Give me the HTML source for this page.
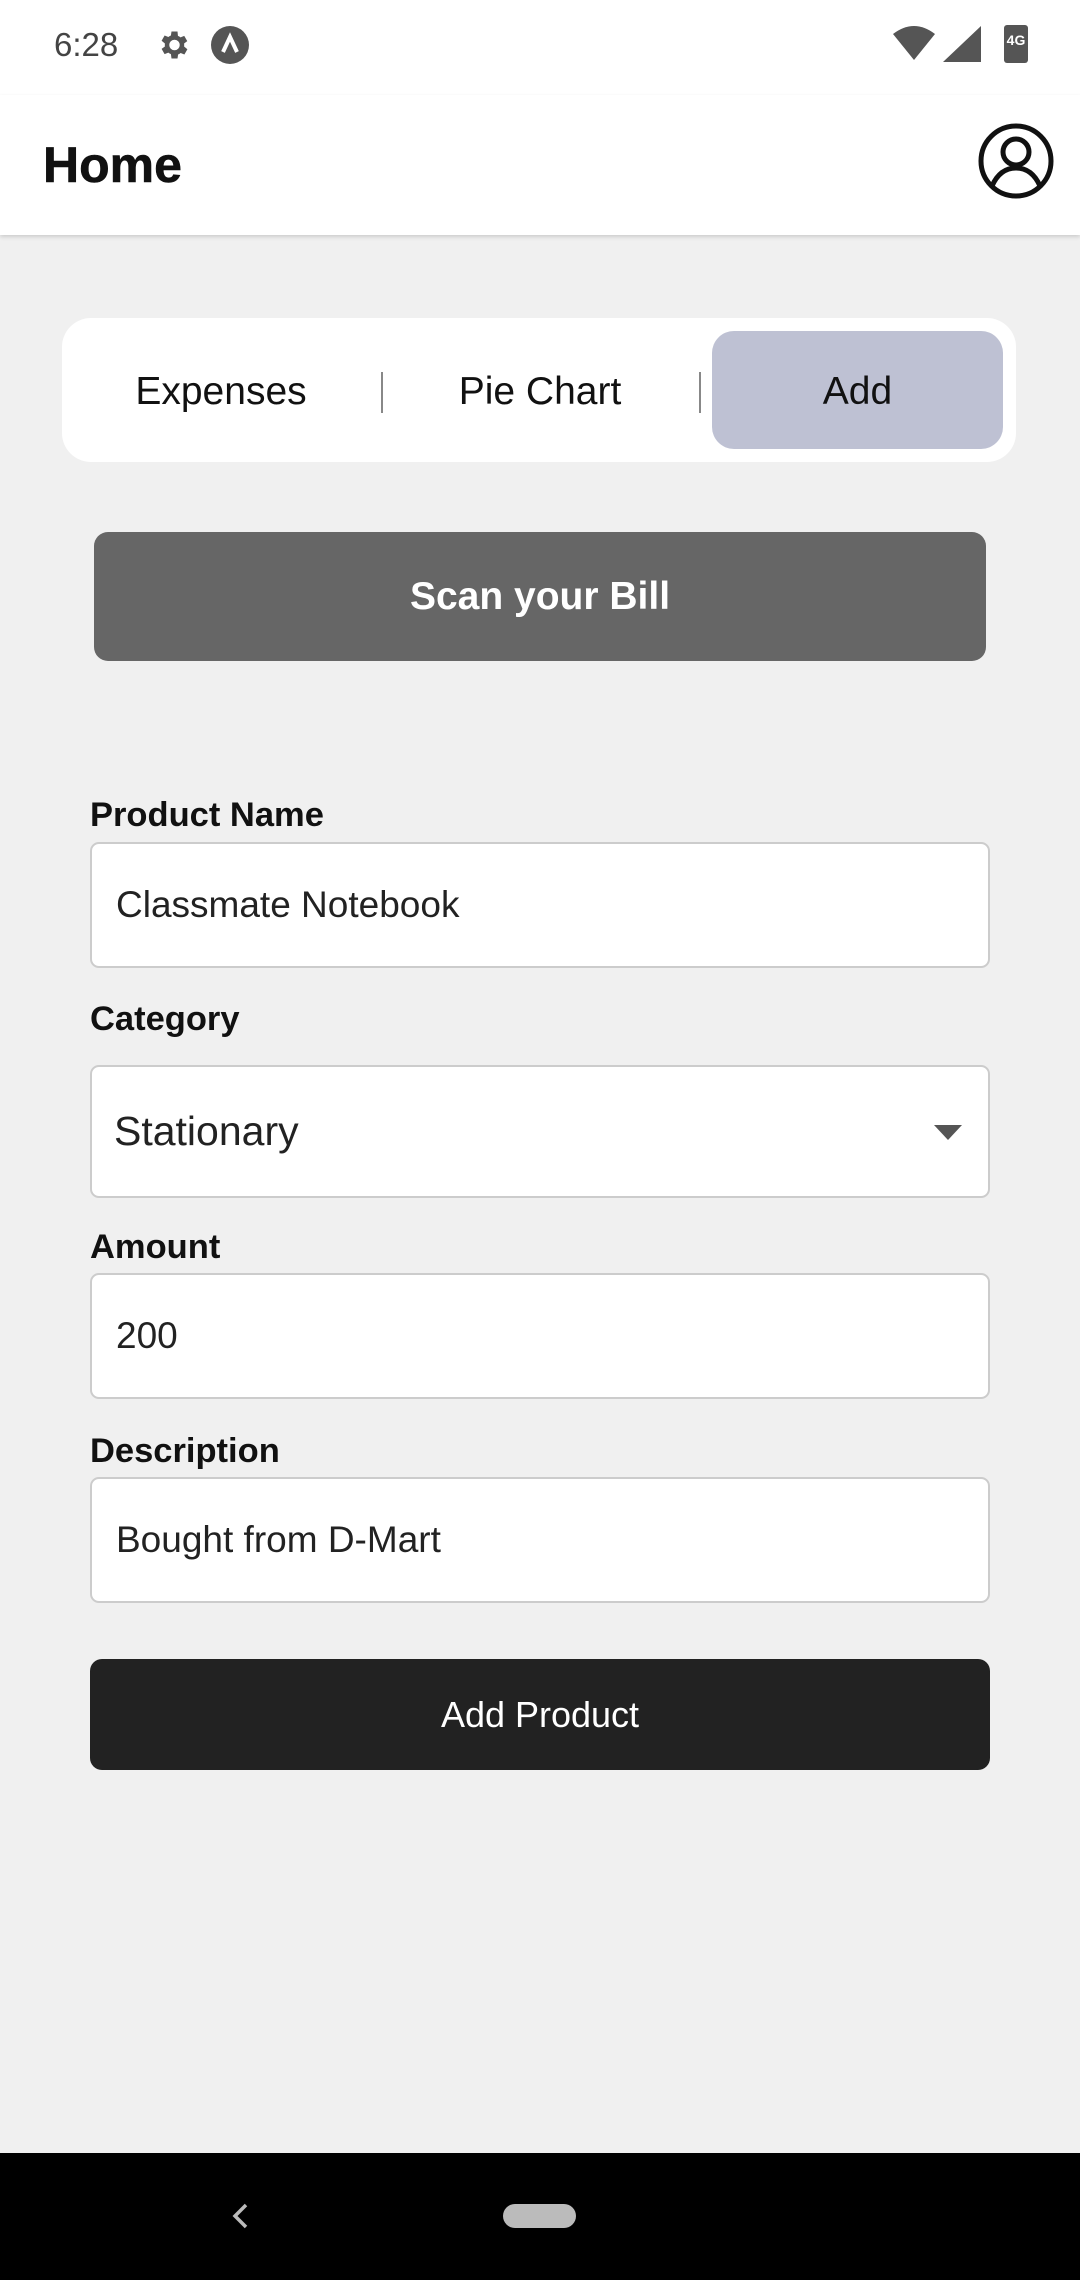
<!DOCTYPE html>
<html><head><meta charset="utf-8"><style>
*{margin:0;padding:0;box-sizing:border-box}
body{width:1080px;height:2280px;background:#f0f0f0;font-family:"Liberation Sans",Roboto,sans-serif;position:relative;overflow:hidden}
.abs{position:absolute}
.status{left:0;top:0;width:1080px;height:95px;background:#fff}
.header{left:0;top:95px;width:1080px;height:140px;background:#fff;box-shadow:0 2px 4px rgba(0,0,0,.15)}
.lbl{position:absolute;left:90px;font-weight:bold;font-size:34.5px;color:#111;line-height:40px}
.inp{position:absolute;left:90px;width:900px;height:126px;background:#fff;border:2px solid #ccc;border-radius:9px;font-size:37px;color:#222;padding-left:24px;display:flex;align-items:center}
</style></head><body>
<div class="abs status">
 <div class="abs" style="left:54px;top:26px;font-size:33px;color:#444">6:28</div>
 <svg class="abs" style="left:155px;top:27px" width="36" height="36" viewBox="0 0 24 24"><path fill="#555" d="M19.4 13a7.5 7.5 0 0 0 0-2l2.1-1.6-2-3.5-2.5 1a7 7 0 0 0-1.7-1L15 3h-4l-.4 2.7a7 7 0 0 0-1.7 1l-2.5-1-2 3.5L6.6 11a7.5 7.5 0 0 0 0 2l-2.2 1.6 2 3.5 2.5-1a7 7 0 0 0 1.7 1L11 21h4l.4-2.7a7 7 0 0 0 1.7-1l2.5 1 2-3.5zM13 15.5a3.5 3.5 0 1 1 0-7 3.5 3.5 0 0 1 0 7z"/></svg>
 <svg class="abs" style="left:210px;top:25px" width="40" height="40" viewBox="0 0 40 40"><circle cx="20" cy="20" r="19" fill="#555"/><path d="M13 27l7-15 7 15" stroke="#fff" stroke-width="4" fill="none"/></svg>
 <svg class="abs" style="left:893px;top:26px" width="42" height="34" viewBox="0 0 42 34"><path d="M0 8Q21-8 42 8L21 34z" fill="#555"/></svg>
 <svg class="abs" style="left:943px;top:26px" width="38" height="36"><path d="M38 0V36H0z" fill="#555"/></svg>
 <div class="abs" style="left:1004px;top:25px;width:24px;height:38px;background:#555;border-radius:3px"></div>
 <div class="abs" style="left:1004px;top:32px;width:24px;font-size:14px;color:#fff;font-weight:bold;text-align:center">4G</div>
</div>
<div class="abs header">
 <div class="abs" style="left:43px;top:41px;font-size:50px;font-weight:600;color:#111;-webkit-text-stroke:0.6px #111">Home</div>
 <svg class="abs" style="left:978px;top:28px" width="76" height="76" viewBox="0 0 76 76"><circle cx="38" cy="38" r="35" fill="none" stroke="#111" stroke-width="5"/><circle cx="38" cy="29" r="13" fill="none" stroke="#111" stroke-width="5"/><path d="M14 63q8-18 24-18t24 18" fill="none" stroke="#111" stroke-width="5"/></svg>
</div>
<div class="abs" style="left:62px;top:318px;width:954px;height:144px;background:#fff;border-radius:29px"></div>
<div class="abs" style="left:712px;top:331px;width:291px;height:118px;background:#bec1d3;border-radius:22px"></div>
<div class="abs" style="left:81px;top:370px;width:280px;text-align:center;font-size:39px;color:#111">Expenses</div>
<div class="abs" style="left:400px;top:370px;width:280px;text-align:center;font-size:39px;color:#111">Pie Chart</div>
<div class="abs" style="left:712px;top:370px;width:291px;text-align:center;font-size:39px;color:#111">Add</div>
<div class="abs" style="left:381px;top:372px;width:2px;height:41px;background:#888"></div>
<div class="abs" style="left:699px;top:372px;width:2px;height:41px;background:#888"></div>
<div class="abs" style="left:94px;top:532px;width:892px;height:129px;background:#666;border-radius:14px;color:#fff;font-weight:bold;font-size:39px;display:flex;align-items:center;justify-content:center">Scan your Bill</div>
<div class="lbl" style="top:795px">Product Name</div>
<div class="inp" style="top:842px">Classmate Notebook</div>
<div class="lbl" style="top:999px">Category</div>
<div class="inp" style="top:1065px;height:133px;font-size:41px;padding-left:22px">Stationary</div>
<svg class="abs" style="left:934px;top:1125px" width="28" height="15"><path d="M0 0H28L14 15z" fill="#555"/></svg>
<div class="lbl" style="top:1227px">Amount</div>
<div class="inp" style="top:1273px">200</div>
<div class="lbl" style="top:1431px">Description</div>
<div class="inp" style="top:1477px">Bought from D-Mart</div>
<div class="abs" style="left:90px;top:1659px;width:900px;height:111px;background:#222;border-radius:12px;color:#fff;font-size:36px;display:flex;align-items:center;justify-content:center">Add Product</div>
<div class="abs" style="left:0;top:2153px;width:1080px;height:127px;background:#000"></div>
<svg class="abs" style="left:230px;top:2202px" width="20" height="28"><path d="M16 3L5 14l11 11" stroke="#bbb" stroke-width="3.5" fill="none"/></svg>
<div class="abs" style="left:503px;top:2204px;width:73px;height:24px;background:#bbb;border-radius:12px"></div>
</body></html>
